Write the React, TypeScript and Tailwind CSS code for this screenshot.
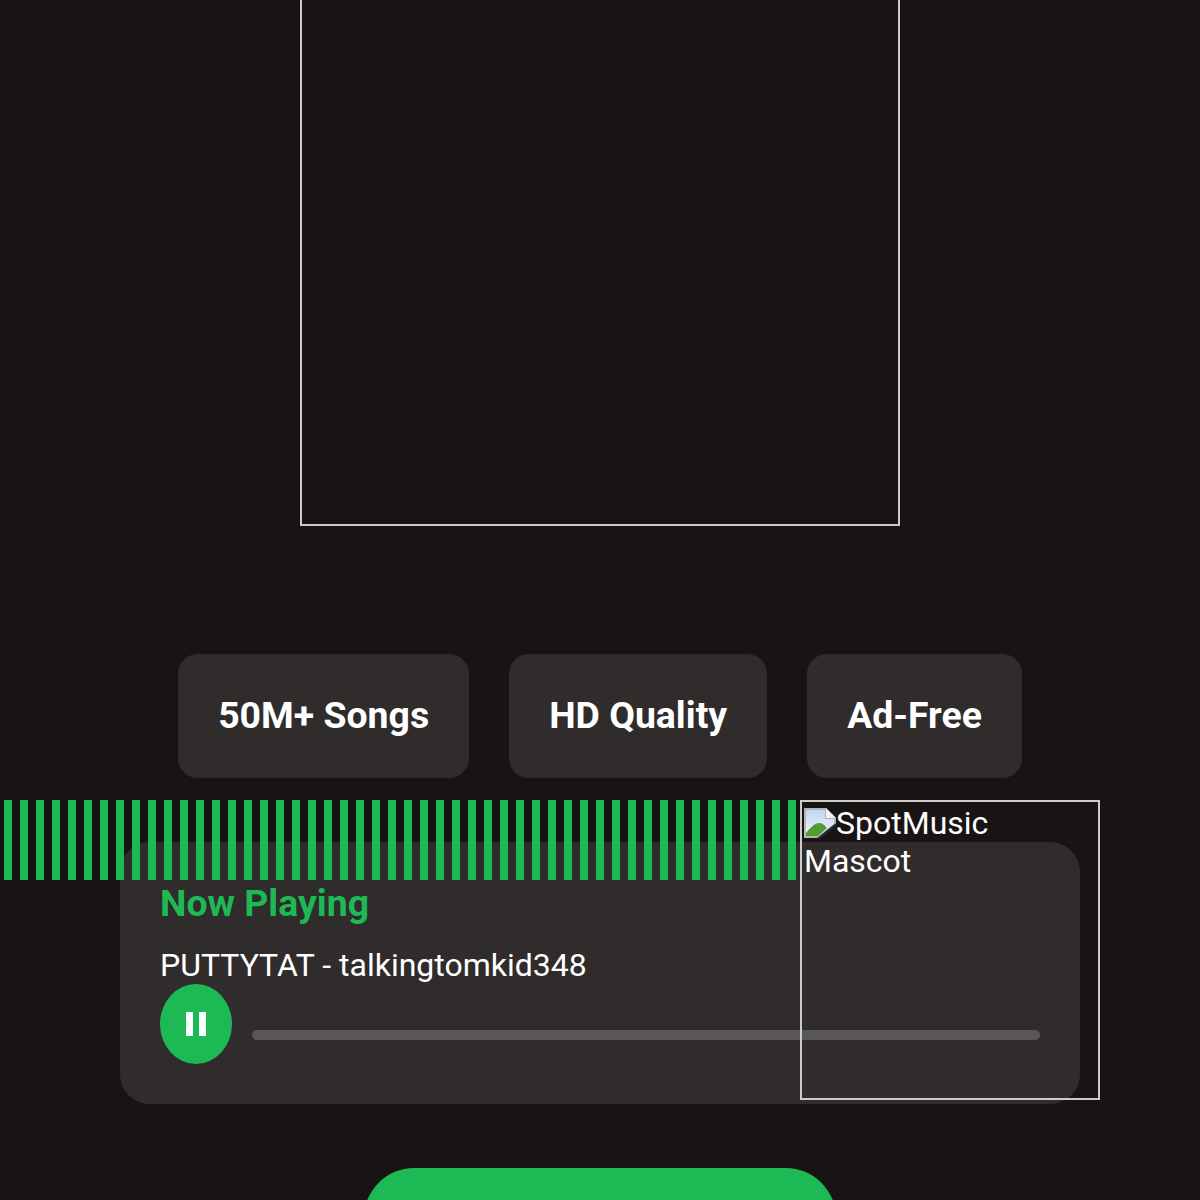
const bars = Array.from({ length: 50 }, (_, i) => i);

const features = ['50M+ Songs', 'HD Quality', 'Ad-Free'];

function BrokenImageIcon() {
  return (
    <svg width="32" height="32" viewBox="0 0 32 32" className="inline-block align-[-5px]">
      <defs>
        <linearGradient id="sky" x1="0" y1="0" x2="0" y2="1">
          <stop offset="0" stopColor="#c4d6f4" />
          <stop offset="1" stopColor="#eef3fc" />
        </linearGradient>
      </defs>
      <path d="M0 1H22L32 11V18L15 31H0Z" fill="#b4b4b4" />
      <path d="M2 3H21V12H30V17L14 29H2Z" fill="url(#sky)" />
      <path d="M2 29V26C6 21 11 16 15 16C19 16 21 19 23 21L14 29Z" fill="#4f9e32" />
      <path d="M22 1L32 11H22Z" fill="#f2f2f2" />
      <path d="M32 17.5L14 32" stroke="#2a2a2a" strokeWidth="2.5" />
    </svg>
  );
}

export default function App() {
  return (
    <div
      className="relative h-[1200px] overflow-hidden bg-[#191414] text-white"
      style={{ fontFamily: 'Roboto, sans-serif' }}
    >
      {/* Hero box, runs off the top of the page */}
      <div className="mx-auto -mt-[74px] h-[600px] w-[600px] border-2 border-[#cccccc]" />

      {/* Features */}
      <div className="mt-[128px] flex justify-center gap-10">
        {features.map((feature) => (
          <div key={feature} className="rounded-[20px] bg-white/10 p-10 text-[37.4px] leading-[43px] font-bold">
            <div className="h-[44px]">{feature}</div>
          </div>
        ))}
      </div>

      {/* Player */}
      <div className="mx-[120px] mt-16 rounded-[30px] bg-white/10 p-10">
        <h3 className="h-[44px] text-[37.4px] leading-[43px] font-bold text-[#1db954]">Now Playing</h3>
        <p className="mt-5 text-[32px] leading-[38px]">PUTTYTAT - talkingtomkid348</p>
        <div className="flex items-center gap-5">
          <button className="flex h-20 w-[72px] items-center justify-center rounded-[50%] bg-[#1db954]">
            <span className="flex gap-[6px]">
              <span className="h-6 w-[7px] bg-white" />
              <span className="h-6 w-[7px] bg-white" />
            </span>
          </button>
          <div className="mt-[22px] h-2.5 flex-1 rounded-full bg-white/20" />
        </div>
      </div>

      <div className="mx-auto mt-16 h-[100px] w-[472px] rounded-[50px] bg-[#1db954]" />

      {/* Visualizer bars sit over the player */}
      <div className="absolute top-[800px] left-0 flex h-20 w-[800px]">
        {bars.map((bar) => (
          <div key={bar} className="mx-1 h-full w-2 bg-[#1db954]" />
        ))}
      </div>

      {/* Mascot with missing image */}
      <div className="absolute top-[800px] left-[800px] h-[300px] w-[300px] border-2 border-[#cccccc] p-0.5 text-[32px] leading-[38px]">
        <BrokenImageIcon />
        SpotMusic Mascot
      </div>
    </div>
  );
}
